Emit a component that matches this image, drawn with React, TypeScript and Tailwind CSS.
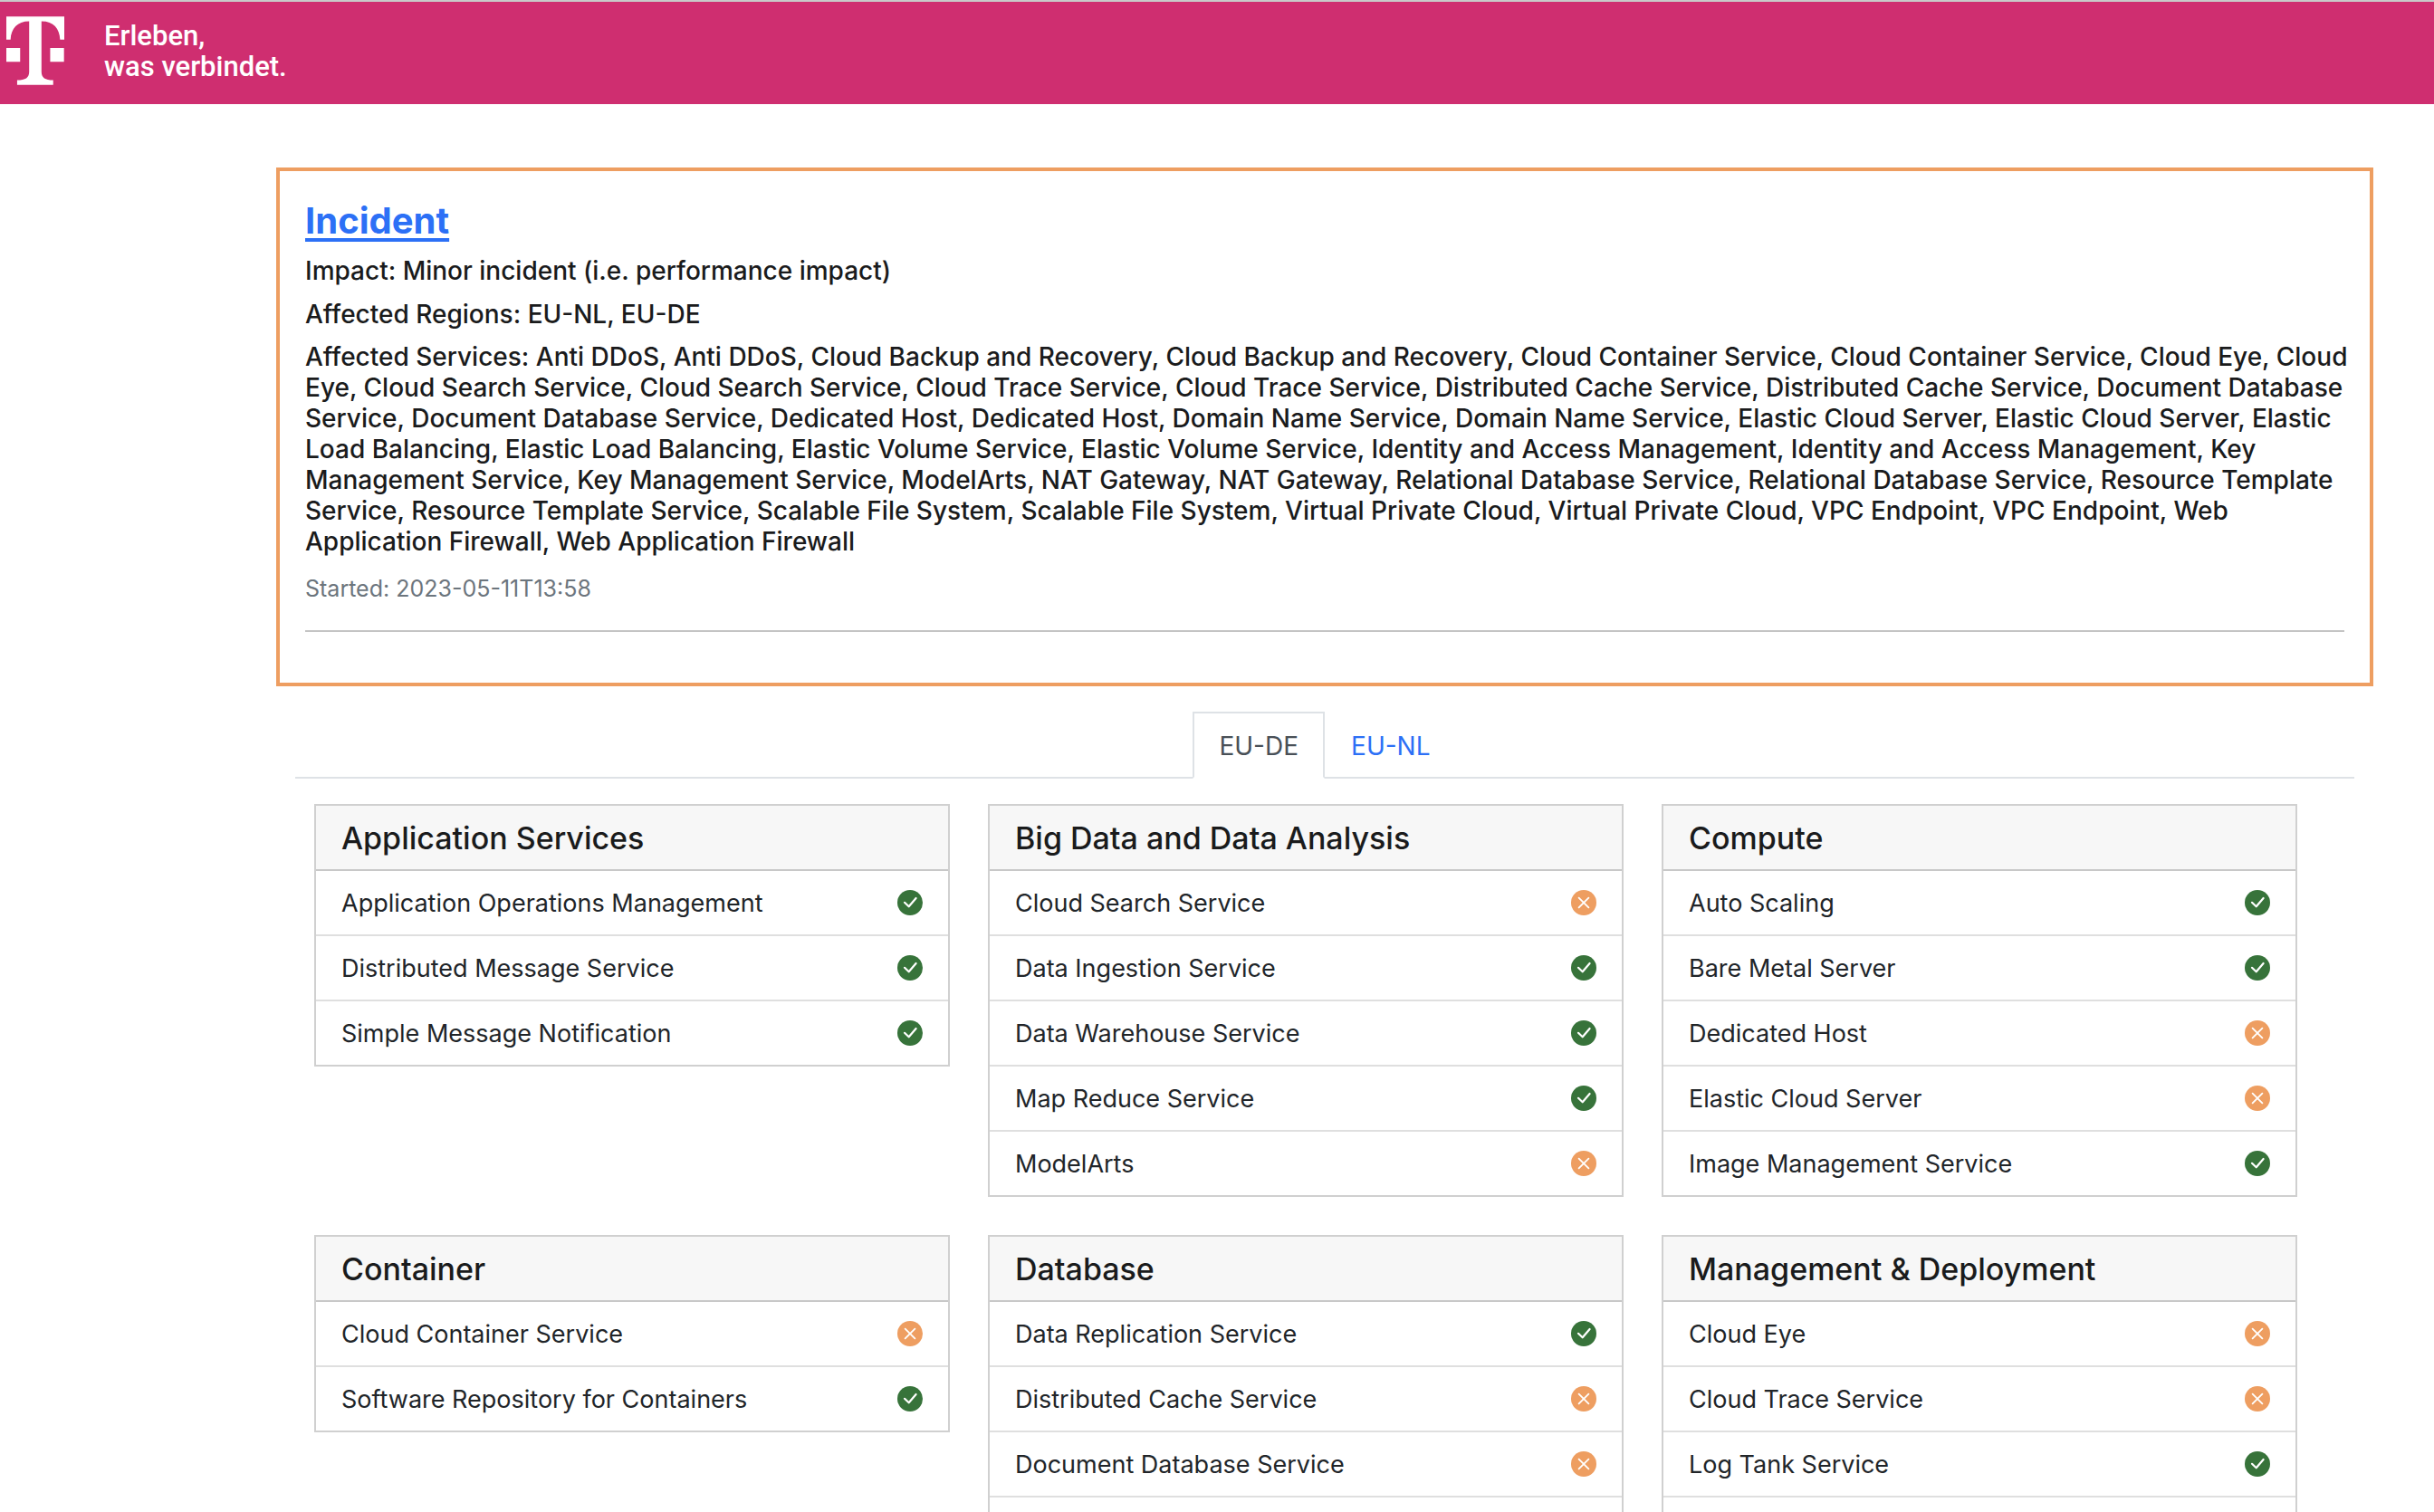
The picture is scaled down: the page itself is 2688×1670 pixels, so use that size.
type Status = 'ok' | 'minor';
type Category = { title: string; services: [string, Status][] };

const categories: Category[] = [
  {
    title: 'Application Services',
    services: [
      ['Application Operations Management', 'ok'],
      ['Distributed Message Service', 'ok'],
      ['Simple Message Notification', 'ok'],
    ],
  },
  {
    title: 'Big Data and Data Analysis',
    services: [
      ['Cloud Search Service', 'minor'],
      ['Data Ingestion Service', 'ok'],
      ['Data Warehouse Service', 'ok'],
      ['Map Reduce Service', 'ok'],
      ['ModelArts', 'minor'],
    ],
  },
  {
    title: 'Compute',
    services: [
      ['Auto Scaling', 'ok'],
      ['Bare Metal Server', 'ok'],
      ['Dedicated Host', 'minor'],
      ['Elastic Cloud Server', 'minor'],
      ['Image Management Service', 'ok'],
    ],
  },
  {
    title: 'Container',
    services: [
      ['Cloud Container Service', 'minor'],
      ['Software Repository for Containers', 'ok'],
    ],
  },
  {
    title: 'Database',
    services: [
      ['Data Replication Service', 'ok'],
      ['Distributed Cache Service', 'minor'],
      ['Document Database Service', 'minor'],
      ['Relational Database Service', 'minor'],
    ],
  },
  {
    title: 'Management & Deployment',
    services: [
      ['Cloud Eye', 'minor'],
      ['Cloud Trace Service', 'minor'],
      ['Log Tank Service', 'ok'],
      ['Resource Template Service', 'minor'],
    ],
  },
];

const affectedServices =
  'Anti DDoS, Anti DDoS, Cloud Backup and Recovery, Cloud Backup and Recovery, Cloud Container Service, Cloud Container Service, Cloud Eye, Cloud Eye, Cloud Search Service, Cloud Search Service, Cloud Trace Service, Cloud Trace Service, Distributed Cache Service, Distributed Cache Service, Document Database Service, Document Database Service, Dedicated Host, Dedicated Host, Domain Name Service, Domain Name Service, Elastic Cloud Server, Elastic Cloud Server, Elastic Load Balancing, Elastic Load Balancing, Elastic Volume Service, Elastic Volume Service, Identity and Access Management, Identity and Access Management, Key Management Service, Key Management Service, ModelArts, NAT Gateway, NAT Gateway, Relational Database Service, Relational Database Service, Resource Template Service, Resource Template Service, Scalable File System, Scalable File System, Virtual Private Cloud, Virtual Private Cloud, VPC Endpoint, VPC Endpoint, Web Application Firewall, Web Application Firewall';

function Logo() {
  return (
    <svg viewBox="0 0 193 228" className="h-[76px] w-[64px] shrink-0" fill="#fff" role="img" aria-label="T">
      <path d="M0 0H193V77H179C177 40 158 16 117 16V184C117 204 129 212 156 212V228H36V212C64 212 76 204 76 184V16C36 16 16 40 14 77H0Z" />
      <path d="M0 105H46V151H0ZM146 105H192V151H146Z" />
    </svg>
  );
}

function StatusIcon({ status }: { status: Status }) {
  const ok = status === 'ok';
  return (
    <svg viewBox="0 0 28 28" className="size-7 shrink-0" role="img" aria-label={ok ? 'Operational' : 'Minor incident'}>
      <circle cx="14" cy="14" r="14" fill={ok ? '#37733a' : '#ee9e61'} />
      <path
        d={ok ? 'M8 13.8L12.7 18.3L20.6 9' : 'M8.6 8.6L19.4 19.4M19.4 8.6L8.6 19.4'}
        fill="none"
        stroke="#fff"
        strokeWidth={ok ? 2.2 : 1.8}
        strokeLinecap="round"
        strokeLinejoin="round"
      />
    </svg>
  );
}

function CategoryCard({ title, services }: Category) {
  return (
    <section className="border-2 border-[#d0d0d0] bg-white">
      <h2 className="border-b-2 border-[#c8c8c8] bg-[#f7f7f7] px-7 pt-0.5 text-[34px] leading-[68px] font-medium text-[#1a1b1c]">
        {title}
      </h2>
      <ul className="divide-y-2 divide-[#dfdfdf]">
        {services.map(([name, status]) => (
          <li key={name} className="flex items-center justify-between px-7">
            <span className="pt-0.5 leading-[68px]">{name}</span>
            <StatusIcon status={status} />
          </li>
        ))}
      </ul>
    </section>
  );
}

export default function App() {
  return (
    <div className="h-screen overflow-hidden bg-white font-['Inter','Liberation_Sans',sans-serif] text-[27px] text-[#212529]">
      <header className="flex items-start gap-11 border-t-2 border-[#c9c9c9] bg-[#cf2e70] px-[7px] pt-4 pb-[21px]">
        <Logo />
        <p className="pt-[5px] font-['Roboto',sans-serif] text-[31px] leading-[34px] font-medium text-white">
          Erleben,
          <br />
          was verbindet.
        </p>
      </header>

      <main className="pt-[70px] pr-[67px] pl-[305px]">
        <section className="border-4 border-[#ee9e61] px-7 pt-[30px] pb-[56px] text-[28px] leading-[34px] font-medium text-[#1a1b1c]">
          <h1 className="text-[40px] leading-[50px] font-bold">
            <a href="#incident" className="text-[#2c70f6] underline decoration-4 underline-offset-[5px]">
              Incident
            </a>
          </h1>
          <p className="mt-[13px]">Impact: Minor incident (i.e. performance impact)</p>
          <p className="mt-3.5">Affected Regions: EU-NL, EU-DE</p>
          <p className="mt-[13px] -mr-4">{`Affected Services: ${affectedServices}`}</p>
          <p className="mt-3.5 border-b-2 border-[#c4c4c4] pb-[25px] text-[25px] leading-[42px] font-normal text-[#6c757d]">
            Started: 2023-05-11T13:58
          </p>
        </section>

        <div role="tablist" className="mx-[21px] mt-7 flex justify-center border-b-2 border-[#dee2e6]">
          <button
            role="tab"
            aria-selected="true"
            className="-mb-0.5 border-2 border-[#dee2e6] border-b-white px-[27px] pt-0.5 text-[28px] leading-[68px] text-[#495057]"
          >
            EU-DE
          </button>
          <button
            role="tab"
            aria-selected="false"
            className="border-t-2 border-transparent px-[29px] pt-0.5 text-[28px] leading-[68px] text-[#2c70f6]"
          >
            EU-NL
          </button>
        </div>

        <div className="mt-7 grid grid-cols-3 items-start gap-[42px] pr-[84px] pl-[42px]">
          {categories.map((category) => (
            <CategoryCard key={category.title} {...category} />
          ))}
        </div>
      </main>
    </div>
  );
}
